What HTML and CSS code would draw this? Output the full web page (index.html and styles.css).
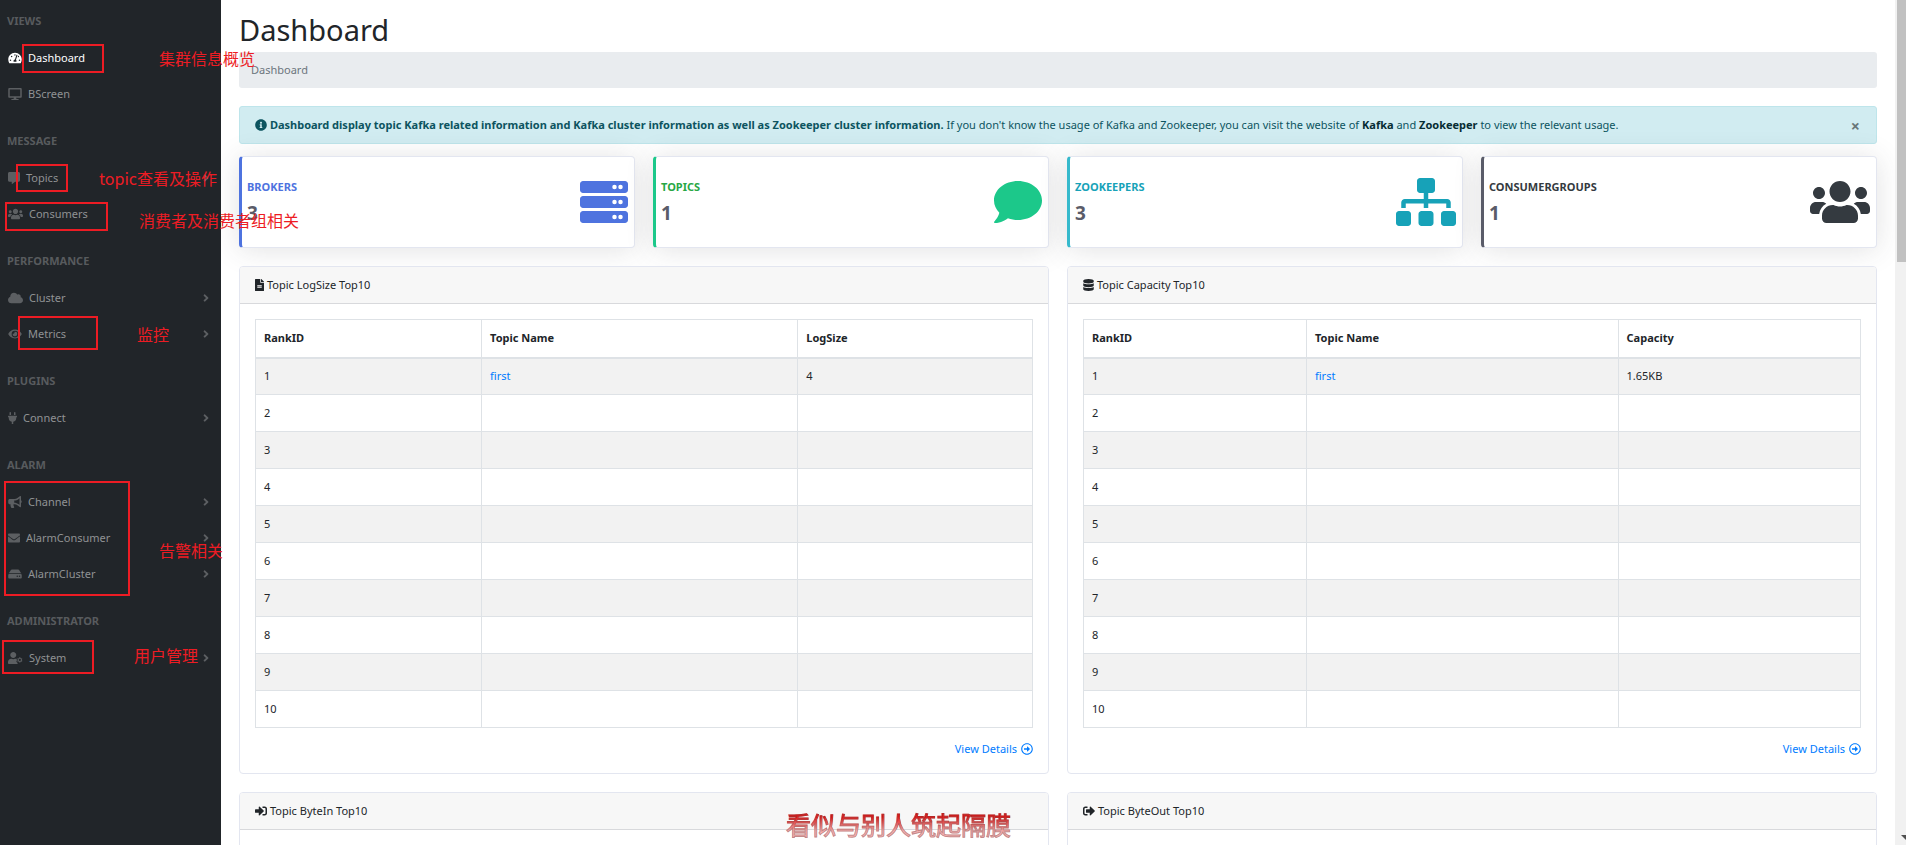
FILE: index.html
```html
<!DOCTYPE html>
<html lang="en">
<head>
<meta charset="utf-8">
<title>Dashboard</title>
<link rel="stylesheet" href="styles.css">
</head>
<body>
<svg class="sprite" aria-hidden="true">
  <symbol id="tachometer" viewBox="0 0 576 512"><path d="M288 32C128.94 32 0 160.94 0 320c0 52.8 14.25 102.26 39.06 144.8 5.61 9.62 16.3 15.2 27.44 15.2h443c11.14 0 21.83-5.58 27.44-15.2C561.75 422.26 576 372.8 576 320c0-159.06-128.94-288-288-288zm0 64c14.71 0 26.58 10.13 30.32 23.65-1.11 2.26-2.64 4.23-3.45 6.67l-9.22 27.67c-5.13 3.49-10.97 6.01-17.64 6.01-17.67 0-32-14.33-32-32S270.33 96 288 96zM96 384c-17.67 0-32-14.33-32-32s14.33-32 32-32 32 14.33 32 32-14.33 32-32 32zm48-160c-17.67 0-32-14.33-32-32s14.33-32 32-32 32 14.33 32 32-14.33 32-32 32zm246.77-72.41l-61.33 184C343.13 347.33 352 364.54 352 384c0 11.72-3.38 22.55-8.88 32H232.88c-5.5-9.45-8.88-20.28-8.88-32 0-33.94 26.5-61.43 59.9-63.59l61.34-184.01c4.17-12.56 17.73-19.45 30.36-15.17 12.57 4.19 19.35 17.79 15.17 30.36zm14.66 57.2l15.52-46.55c3.47-1.29 7.13-2.23 11.05-2.23 17.67 0 32 14.33 32 32s-14.33 32-32 32c-11.38-.01-20.89-6.28-26.57-15.22zM480 384c-17.67 0-32-14.33-32-32s14.33-32 32-32 32 14.33 32 32-14.33 32-32 32z"/></symbol>
  <symbol id="desktop" viewBox="0 0 576 512"><path d="M528 0H48C21.5 0 0 21.5 0 48v320c0 26.500 21.500 48 48 48h192l-16 48h-72c-13.300 0-24 10.700-24 24s10.700 24 24 24h272c13.300 0 24-10.700 24-24s-10.700-24-24-24h-72l-16-48h192c26.500 0 48-21.500 48-48V48c0-26.500-21.500-48-48-48zm-16 352H64V64h448v288z"/></symbol>
  <symbol id="comment-alt" viewBox="0 0 512 512"><path d="M448 0H64C28.700 0 0 28.700 0 64v288c0 35.300 28.700 64 64 64h96v84c0 9.800 11.200 15.500 19.100 9.700L304 416h144c35.300 0 64-28.700 64-64V64c0-35.300-28.700-64-64-64z"/></symbol>
  <symbol id="users" viewBox="0 0 640 512"><path d="M96 224c35.300 0 64-28.700 64-64s-28.700-64-64-64-64 28.700-64 64 28.700 64 64 64zm448 0c35.300 0 64-28.700 64-64s-28.700-64-64-64-64 28.700-64 64 28.700 64 64 64zm32 32h-64c-17.600 0-33.500 7.100-45.100 18.600 40.300 22.100 68.900 62 75.100 109.400h66c17.700 0 32-14.300 32-32v-32c0-35.300-28.700-64-64-64zm-256 0c61.900 0 112-50.100 112-112S381.900 32 320 32 208 82.100 208 144s50.100 112 112 112zm76.800 32h-8.300c-20.800 10-43.900 16-68.500 16s-47.600-6-68.500-16h-8.300C179.600 288 128 339.600 128 403.200V432c0 26.500 21.500 48 48 48h288c26.500 0 48-21.500 48-48v-28.800c0-63.600-51.600-115.200-115.200-115.200zm-223.700-13.400C161.500 263.100 145.600 256 128 256H64c-35.300 0-64 28.700-64 64v32c0 17.700 14.300 32 32 32h65.900c6.300-47.400 34.900-87.300 75.200-109.400z"/></symbol>
  <symbol id="cloud" viewBox="0 0 640 512"><path d="M537.600 226.600c4.100-10.700 6.400-22.400 6.400-34.600 0-53-43-96-96-96-19.700 0-38.100 6-53.300 16.200C367 64.200 315.300 32 256 32c-88.400 0-160 71.600-160 160 0 2.700.1 5.400.2 8.100C40.200 219.800 0 273.200 0 336c0 79.500 64.500 144 144 144h368c70.700 0 128-57.300 128-128 0-61.900-44-113.600-102.400-125.400z"/></symbol>
  <symbol id="eye" viewBox="0 0 576 512"><path d="M572.520 241.400C518.290 135.590 410.930 64 288 64S57.680 135.640 3.480 241.410a32.350 32.350 0 0 0 0 29.190C57.710 376.410 165.070 448 288 448s230.320-71.640 284.520-177.410a32.350 32.350 0 0 0 0-29.190zM288 400a144 144 0 1 1 144-144 143.930 143.930 0 0 1-144 144zm0-240a95.310 95.310 0 0 0-25.310 3.790 47.850 47.850 0 0 1-66.900 66.900A95.780 95.780 0 1 0 288 160z"/></symbol>
  <symbol id="plug" viewBox="0 0 384 512"><path d="M320 32a32 32 0 0 0-64 0v96h64zm48 128H16A16 16 0 0 0 0 176v32a16 16 0 0 0 16 16h16v32a160.070 160.070 0 0 0 128 156.800V512h64v-99.200A160.070 160.070 0 0 0 352 256v-32h16a16 16 0 0 0 16-16v-32a16 16 0 0 0-16-16zM128 32a32 32 0 0 0-64 0v96h64z"/></symbol>
  <symbol id="bullhorn" viewBox="0 0 576 512"><path d="M576 240c0-23.630-12.950-44.040-32-55.120V32.010C544 23.260 537.020 0 512 0c-7.120 0-14.190 2.380-19.980 7.020l-85.030 68.030C364.280 109.190 310.660 128 256 128H64c-35.350 0-64 28.650-64 64v96c0 35.350 28.650 64 64 64h33.700c-1.390 10.480-2.180 21.140-2.180 32 0 39.770 9.260 77.350 25.560 110.940 5.190 10.690 16.520 17.060 28.400 17.060h74.280c26.050 0 41.690-29.840 25.900-50.560-16.400-21.520-26.150-48.360-26.150-77.440 0-11.110 1.620-21.790 4.410-32H256c54.660 0 108.280 18.810 150.980 52.950l85.030 68.030a32.023 32.023 0 0 0 19.980 7.020c24.920 0 32-22.780 32-32V295.130C563.050 284.040 576 263.630 576 240zm-96 141.420l-33.050-26.440C392.950 311.780 325.120 288 256 288v-96c69.120 0 136.950-23.780 190.950-66.980L480 98.580v282.840z"/></symbol>
  <symbol id="envelope" viewBox="0 0 512 512"><path d="M502.300 190.800c3.900-3.100 9.700-.2 9.700 4.700V400c0 26.500-21.500 48-48 48H48c-26.500 0-48-21.500-48-48V195.600c0-5 5.700-7.800 9.700-4.700 22.400 17.400 52.100 39.500 154.100 113.600 21.100 15.400 56.700 47.800 92.200 47.600 35.700.3 72-32.800 92.300-47.600 102-74.100 131.600-96.300 154-113.700zM256 320c23.200.4 56.600-29.200 73.400-41.400 132.700-96.300 142.800-104.700 173.400-128.700 5.800-4.500 9.200-11.500 9.200-18.900v-19c0-26.500-21.500-48-48-48H48c-26.500 0-48 21.500-48 48v19c0 7.400 3.400 14.300 9.200 18.900 30.600 23.900 40.700 32.400 173.400 128.700 16.800 12.200 50.200 41.800 73.400 41.400z"/></symbol>
  <symbol id="hdd" viewBox="0 0 576 512"><path d="M576 304v96c0 26.500-21.500 48-48 48H48c-26.500 0-48-21.500-48-48v-96c0-26.500 21.500-48 48-48h480c26.500 0 48 21.500 48 48zm-48-80a79.600 79.600 0 0 1 30.800 6.200L462.300 85.400A48 48 0 0 0 422.300 64H153.700a48 48 0 0 0-40 21.400L17.200 230.200A79.600 79.600 0 0 1 48 224zm-48 96c-17.700 0-32 14.300-32 32s14.300 32 32 32 32-14.300 32-32-14.300-32-32-32zm-96 0c-17.700 0-32 14.300-32 32s14.300 32 32 32 32-14.300 32-32-14.300-32-32-32z"/></symbol>
  <symbol id="user-cog" viewBox="0 0 640 512"><path d="M224 256c70.700 0 128-57.300 128-128S294.700 0 224 0 96 57.300 96 128s57.300 128 128 128zM400 300c-30-10-60-12-86-12h-17a174 174 0 0 1-146 0h-17C60 288 0 348 0 422v42c0 26.500 21.500 48 48 48h352c10 0 18-2 25-6l-20-14v-34l-30-22-22-48 30-24v-28l-28-18z"/><path fill-rule="evenodd" d="M482 224h44l8 34 24 14 34-10 22 38-26 24v28l26 24-22 38-34-10-24 14-8 34h-44l-8-34-24-14-34 10-22-38 26-24v-28l-26-24 22-38 34 10 24-14zm22 66a48 48 0 1 0 0 96 48 48 0 0 0 0-96z"/></symbol>
  <symbol id="angle" viewBox="0 0 256 512"><path d="M224.300 273l-136 136c-9.400 9.400-24.600 9.400-33.900 0l-22.600-22.600c-9.400-9.400-9.400-24.600 0-33.900l96.400-96.400-96.400-96.400c-9.400-9.400-9.400-24.600 0-33.900L54.300 103c9.400-9.400 24.600-9.400 33.900 0l136 136c9.500 9.400 9.500 24.600.1 34z"/></symbol>
  <symbol id="info" viewBox="0 0 512 512"><path d="M256 8C119.040 8 8 119.080 8 256c0 137 111.040 248 248 248s248-111 248-248C504 119.080 392.960 8 256 8zm0 110c23.200 0 42 18.800 42 42s-18.800 42-42 42-42-18.800-42-42 18.800-42 42-42zm56 254c0 6.600-5.400 12-12 12h-88c-6.600 0-12-5.400-12-12v-24c0-6.600 5.400-12 12-12h12v-64h-12c-6.600 0-12-5.400-12-12v-24c0-6.600 5.400-12 12-12h64c6.600 0 12 5.400 12 12v100h12c6.600 0 12 5.400 12 12z"/></symbol>
  <symbol id="server" viewBox="0 0 512 512"><path id="unit" d="M480 160H32c-17.700 0-32-14.300-32-32V64c0-17.700 14.300-32 32-32h448c17.700 0 32 14.300 32 32v64c0 17.700-14.300 32-32 32zm-48-88a24 24 0 1 0 0 48 24 24 0 0 0 0-48zm-64 0a24 24 0 1 0 0 48 24 24 0 0 0 0-48z"/><use href="#unit" y="160"/><use href="#unit" y="320"/></symbol>
  <symbol id="comment" viewBox="0 0 512 512"><path d="M256 32C114.600 32 0 125.100 0 240c0 49.600 21.400 95 57 130.700C44.500 421.100 2.700 466 2.200 466.500c-2.200 2.300-2.800 5.700-1.500 8.700S4.800 480 8 480c66.300 0 116-31.800 140.600-51.400 32.700 12.300 69 19.400 107.400 19.400 141.400 0 256-93.100 256-208S397.400 32 256 32z"/></symbol>
  <symbol id="sitemap" viewBox="0 0 640 512"><path d="M128 352H32c-17.670 0-32 14.330-32 32v96c0 17.670 14.330 32 32 32h96c17.670 0 32-14.330 32-32v-96c0-17.670-14.330-32-32-32zm-24-80h192v48h48v-48h192v48h48v-57.590c0-21.170-17.230-38.410-38.410-38.410H344v-64h40c17.670 0 32-14.330 32-32V32c0-17.670-14.330-32-32-32H256c-17.670 0-32 14.330-32 32v96c0 17.670 14.330 32 32 32h40v64H94.410C73.230 224 56 241.230 56 262.410V320h48v-48zm264 80h-96c-17.670 0-32 14.330-32 32v96c0 17.670 14.330 32 32 32h96c17.670 0 32-14.330 32-32v-96c0-17.670-14.330-32-32-32zm240 0h-96c-17.670 0-32 14.330-32 32v96c0 17.670 14.330 32 32 32h96c17.670 0 32-14.330 32-32v-96c0-17.670-14.330-32-32-32z"/></symbol>
  <symbol id="file" viewBox="0 0 384 512"><path d="M224 136V0H24C10.700 0 0 10.700 0 24v464c0 13.300 10.700 24 24 24h336c13.300 0 24-10.700 24-24V160H248c-13.200 0-24-10.800-24-24zm64 236c0 6.600-5.400 12-12 12H108c-6.600 0-12-5.400-12-12v-8c0-6.600 5.400-12 12-12h168c6.600 0 12 5.400 12 12v8zm0-72v8c0 6.600-5.400 12-12 12H108c-6.600 0-12-5.400-12-12v-40h180c6.600 0 12 5.400 12 12v20zM384 122v6H256V0h6c6.400 0 12.500 2.500 17 7l98 98c4.500 4.500 7 10.600 7 17z"/></symbol>
  <symbol id="database" viewBox="0 0 448 512"><path d="M448 73.140v45.720C448 159.140 347.670 192 224 192S0 159.140 0 118.860V73.140C0 32.860 100.330 0 224 0s224 32.860 224 73.140zM448 176v102.860C448 319.140 347.670 352 224 352S0 319.140 0 278.860V176c48.120 33.140 136.210 48.570 224 48.570S399.870 209.140 448 176zm0 160v102.860C448 479.140 347.670 512 224 512S0 479.140 0 438.860V336c48.120 33.140 136.210 48.570 224 48.570S399.870 369.140 448 336z"/></symbol>
  <symbol id="sign-in" viewBox="0 0 512 512"><path d="M416 448h-84c-6.600 0-12-5.400-12-12v-40c0-6.600 5.400-12 12-12h84c17.700 0 32-14.300 32-32V160c0-17.700-14.300-32-32-32h-84c-6.600 0-12-5.400-12-12V76c0-6.600 5.400-12 12-12h84c53 0 96 43 96 96v192c0 53-43 96-96 96zm-47-209L201 71c-15-15-41-4.500-41 17v96H24c-13.300 0-24 10.700-24 24v96c0 13.300 10.700 24 24 24h136v96c0 21.500 26 32 41 17l168-168c9.300-9.400 9.300-24.600 0-34z"/></symbol>
  <symbol id="sign-out" viewBox="0 0 512 512"><path d="M497 273L329 441c-15 15-41 4.500-41-17v-96H152c-13.300 0-24-10.700-24-24v-96c0-13.300 10.700-24 24-24h136V88c0-21.400 25.900-32 41-17l168 168c9.300 9.400 9.300 24.600 0 34zM192 436v-40c0-6.600-5.400-12-12-12H96c-17.700 0-32-14.300-32-32V160c0-17.700 14.300-32 32-32h84c6.600 0 12-5.400 12-12V76c0-6.600-5.400-12-12-12H96c-53 0-96 43-96 96v192c0 53 43 96 96 96h84c6.600 0 12-5.400 12-12z"/></symbol>
  <symbol id="arrow-circle" viewBox="0 0 512 512"><path d="M504 256C504 119 393 8 256 8S8 119 8 256s111 248 248 248 248-111 248-248zm-448 0c0-110.500 89.500-200 200-200s200 89.500 200 200-89.500 200-200 200S56 366.500 56 256zm72 20v-40c0-6.600 5.400-12 12-12h116v-67c0-10.700 12.900-16 20.500-8.500l99 99c4.700 4.700 4.700 12.300 0 17l-99 99c-7.600 7.600-20.500 2.200-20.500-8.500v-67H140c-6.600 0-12-5.400-12-12z"/></symbol>
</svg>

<div class="app">
  <nav class="sidebar">
    <h2 class="group">Views</h2>
    <a class="item active" href="#"><svg class="icon w14"><use href="#tachometer"/></svg><span class="label">Dashboard</span></a>
    <a class="item" href="#"><svg class="icon w14"><use href="#desktop"/></svg><span class="label">BScreen</span></a>
    <h2 class="group">Message</h2>
    <a class="item" href="#"><svg class="icon w12"><use href="#comment-alt"/></svg><span class="label">Topics</span><svg class="caret"><use href="#angle"/></svg></a>
    <a class="item" href="#"><svg class="icon w15"><use href="#users"/></svg><span class="label">Consumers</span></a>
    <h2 class="group">Performance</h2>
    <a class="item" href="#"><svg class="icon w15"><use href="#cloud"/></svg><span class="label">Cluster</span><svg class="caret"><use href="#angle"/></svg></a>
    <a class="item" href="#"><svg class="icon w14"><use href="#eye"/></svg><span class="label">Metrics</span><svg class="caret"><use href="#angle"/></svg></a>
    <h2 class="group">Plugins</h2>
    <a class="item" href="#"><svg class="icon w9"><use href="#plug"/></svg><span class="label">Connect</span><svg class="caret"><use href="#angle"/></svg></a>
    <h2 class="group">Alarm</h2>
    <a class="item" href="#"><svg class="icon w14"><use href="#bullhorn"/></svg><span class="label">Channel</span><svg class="caret"><use href="#angle"/></svg></a>
    <a class="item" href="#"><svg class="icon w12"><use href="#envelope"/></svg><span class="label">AlarmConsumer</span><svg class="caret"><use href="#angle"/></svg></a>
    <a class="item" href="#"><svg class="icon w14"><use href="#hdd"/></svg><span class="label">AlarmCluster</span><svg class="caret"><use href="#angle"/></svg></a>
    <h2 class="group">Administrator</h2>
    <a class="item" href="#"><svg class="icon w15"><use href="#user-cog"/></svg><span class="label">System</span><svg class="caret"><use href="#angle"/></svg></a>
  </nav>

  <main class="content">
    <h1 class="title">Dashboard</h1>
    <ol class="breadcrumb"><li>Dashboard</li></ol>
    <div class="alert" role="alert">
      <p class="alert-text"><svg class="icon w12"><use href="#info"/></svg> <strong>Dashboard display topic Kafka related information and Kafka cluster information as well as Zookeeper cluster information.</strong> If you don't know the usage of Kafka and Zookeeper, you can visit the website of <a class="alert-link" href="#">Kafka</a> and <a class="alert-link" href="#">Zookeeper</a> to view the relevant usage.</p>
      <button class="close" type="button" aria-label="Close">×</button>
    </div>

    <section class="stats">
      <article class="stat brokers"><div><h3 class="stat-name">Brokers</h3><p class="stat-value">3</p></div><svg class="stat-icon"><use href="#server"/></svg></article>
      <article class="stat topics"><div><h3 class="stat-name">Topics</h3><p class="stat-value">1</p></div><svg class="stat-icon"><use href="#comment"/></svg></article>
      <article class="stat zookeepers"><div><h3 class="stat-name">Zookeepers</h3><p class="stat-value">3</p></div><svg class="stat-icon wide"><use href="#sitemap"/></svg></article>
      <article class="stat groups"><div><h3 class="stat-name">ConsumerGroups</h3><p class="stat-value">1</p></div><svg class="stat-icon wide"><use href="#users"/></svg></article>
    </section>

    <section class="panels">
      <article class="panel">
        <h3 class="panel-head"><svg class="icon w9"><use href="#file"/></svg>Topic LogSize Top10</h3>
        <div class="panel-body">
          <table class="rank logsize">
            <thead><tr><th class="c1">RankID</th><th class="c2">Topic Name</th><th>LogSize</th></tr></thead>
            <tbody>
              <tr><td>1</td><td><a href="#">first</a></td><td>4</td></tr>
              <tr><td>2</td><td></td><td></td></tr><tr><td>3</td><td></td><td></td></tr>
              <tr><td>4</td><td></td><td></td></tr><tr><td>5</td><td></td><td></td></tr>
              <tr><td>6</td><td></td><td></td></tr><tr><td>7</td><td></td><td></td></tr>
              <tr><td>8</td><td></td><td></td></tr><tr><td>9</td><td></td><td></td></tr>
              <tr><td>10</td><td></td><td></td></tr>
            </tbody>
          </table>
          <a class="details" href="#">View Details<svg class="icon w12"><use href="#arrow-circle"/></svg></a>
        </div>
      </article>
      <article class="panel">
        <h3 class="panel-head"><svg class="icon w11"><use href="#database"/></svg>Topic Capacity Top10</h3>
        <div class="panel-body">
          <table class="rank capacity">
            <thead><tr><th class="c1">RankID</th><th class="c2">Topic Name</th><th>Capacity</th></tr></thead>
            <tbody>
              <tr><td>1</td><td><a href="#">first</a></td><td>1.65KB</td></tr>
              <tr><td>2</td><td></td><td></td></tr><tr><td>3</td><td></td><td></td></tr>
              <tr><td>4</td><td></td><td></td></tr><tr><td>5</td><td></td><td></td></tr>
              <tr><td>6</td><td></td><td></td></tr><tr><td>7</td><td></td><td></td></tr>
              <tr><td>8</td><td></td><td></td></tr><tr><td>9</td><td></td><td></td></tr>
              <tr><td>10</td><td></td><td></td></tr>
            </tbody>
          </table>
          <a class="details" href="#">View Details<svg class="icon w12"><use href="#arrow-circle"/></svg></a>
        </div>
      </article>
      <article class="panel">
        <h3 class="panel-head"><svg class="icon w12"><use href="#sign-in"/></svg>Topic ByteIn Top10</h3>
        <div class="panel-body"></div>
      </article>
      <article class="panel">
        <h3 class="panel-head"><svg class="icon w12"><use href="#sign-out"/></svg>Topic ByteOut Top10</h3>
        <div class="panel-body"></div>
      </article>
    </section>
  </main>

  <div class="scrollbar" aria-hidden="true"><div class="thumb"></div><svg class="scroll-arrow" viewBox="0 0 5 5"><path d="M0 0h5v5z"/></svg></div>
</div>

<div class="notes">
  <span class="box b-dashboard"></span><span class="note n-dashboard">集群信息概览</span>
  <span class="box b-topics"></span><span class="note n-topics">topic查看及操作</span>
  <span class="box b-consumers"></span><span class="note n-consumers">消费者及消费者组相关</span>
  <span class="box b-metrics"></span><span class="note n-metrics">监控</span>
  <span class="box b-alarm"></span><span class="note n-alarm">告警相关</span>
  <span class="box b-system"></span><span class="note n-system">用户管理</span>
  <span class="subtitle">看似与别人筑起隔膜</span>
</div>
</body>
</html>
```
FILE: styles.css
```css
* { box-sizing: border-box; }

body {
  margin: 0;
  font-family: "Noto Sans", "Noto Sans CJK SC", sans-serif;
  font-size: 11px;
  line-height: 18px;
  color: #212529;
  background: #fff;
}

h1, h2, h3, p, ol { margin: 0; padding: 0; }
a { color: #007bff; text-decoration: none; }
.sprite { position: absolute; width: 0; height: 0; }

.icon { flex: none; height: 12px; fill: currentColor; }
.w9 { width: 9px; }
.w11 { width: 11px; }
.w12 { width: 12px; }
.w14 { width: 14px; }
.w15 { width: 15px; }

.app {
  display: grid;
  grid-template-columns: 221px minmax(0, 1fr) 11px;
  height: 100vh;
  overflow: hidden;
}

/* Sidebar */
.sidebar { background: #212529; }
.group {
  padding: 20px 7px 10px;
  font-size: 11px;
  font-weight: 700;
  text-transform: uppercase;
  color: #585b5e;
}
.group:first-child { padding-top: 12px; }
.item {
  display: flex;
  align-items: center;
  gap: 6px;
  height: 36px;
  padding: 0 12px 0 8px;
  color: #909294;
}
.item .icon, .caret { fill: #5c5f62; }
.item.active { color: #fff; }
.item.active .icon { fill: #fff; }
.label { flex: 1; }
.caret { width: 6px; height: 12px; }

/* Content */
.content { padding: 8px 18px 0; overflow: hidden; }
.title { font-size: 29px; line-height: 44px; font-weight: 400; }
.breadcrumb {
  list-style: none;
  margin-bottom: 18px;
  padding: 9px 12px;
  border-radius: 3px;
  color: #6c757d;
  background: #e9ecef;
}
.alert {
  display: flex;
  align-items: center;
  justify-content: space-between;
  margin-bottom: 12px;
  padding: 9px 16px 9px 15px;
  border: 1px solid #bee5eb;
  border-radius: 3px;
  color: #0c5460;
  background: #d1ecf1;
}
.alert-text .icon { vertical-align: -2px; }
.alert-link { font-weight: 700; color: #062c33; }
.close {
  padding: 2px 0 0;
  border: 0;
  font: 700 16px/16px "Noto Sans", sans-serif;
  color: #687678;
  background: none;
}

.stats {
  display: grid;
  grid-template-columns: repeat(4, minmax(0, 1fr));
  gap: 18px;
  margin-bottom: 18px;
}
.stat {
  display: flex;
  align-items: center;
  justify-content: space-between;
  height: 92px;
  padding: 0 6px 0 5px;
  border: 1px solid #e3e6f0;
  border-left: 3px solid;
  border-radius: 4px;
  background: #fff;
  box-shadow: 0 2px 28px rgba(58, 59, 69, 0.15);
}
.stat-name { padding-top: 4px; font-size: 11px; font-weight: 700; text-transform: uppercase; }
.stat-value { padding: 4px 0; font-size: 19px; line-height: 26px; font-weight: 700; color: #5a5c69; }
.stat-icon { width: 48px; height: 48px; fill: currentColor; }
.stat-icon.wide { width: 60px; }
.brokers { color: #4e73df; }
.topics { border-left-color: #1cc88a; color: #1cc88a; }
.topics .stat-name { color: #28a745; }
.zookeepers { border-left-color: #36b9cc; color: #17a2b8; }
.groups { border-left-color: #5a5c69; color: #343a40; }

.panels {
  display: grid;
  grid-template-columns: repeat(2, minmax(0, 1fr));
  gap: 18px;
}
.panel {
  position: relative;
  border: 1px solid #e3e6f0;
  border-radius: 4px;
  background: #fff;
  overflow: hidden;
}
.panel-head {
  display: flex;
  align-items: center;
  gap: 3px;
  padding: 9px 15px;
  border-bottom: 1px solid #d8d9dc;
  font-size: 11px;
  font-weight: 400;
  background: #f7f7f7;
}
.panel-body { min-height: 60px; padding: 15px; }
.rank {
  width: 100%;
  margin-bottom: 12px;
  table-layout: fixed;
  border-collapse: collapse;
}
.rank th, .rank td {
  height: 37px;
  padding: 0 8px;
  border: 1px solid #dee2e6;
  text-align: left;
}
.rank thead th { height: 38px; border-bottom-width: 2px; }
.rank tbody tr:nth-child(odd) { background: #f2f2f2; }
.logsize .c1 { width: 29.1%; }
.logsize .c2 { width: 40.7%; }
.capacity .c1 { width: 28.7%; }
.capacity .c2 { width: 40.1%; }
.details {
  display: flex;
  align-items: center;
  justify-content: flex-end;
  gap: 4px;
}

/* Scrollbar */
.scrollbar {
  display: flex;
  flex-direction: column;
  justify-content: space-between;
  align-items: flex-end;
  padding: 0 0 5px 2px;
  background: #f1f1f1;
}
.thumb { width: 100%; height: 31vh; background: #c1c1c1; }
.scroll-arrow { width: 5px; height: 5px; fill: #505050; }

/* Annotations over the page */
.notes { position: absolute; top: 0; left: 0; color: #ed1c24; }
.box { position: absolute; border: 2px solid #ed1c24; }
.note {
  position: absolute;
  font: 16px/20px "Noto Sans CJK SC", sans-serif;
  white-space: nowrap;
}
.b-dashboard { left: 22px; top: 44px; width: 82px; height: 29px; }
.b-topics { left: 16px; top: 164px; width: 52px; height: 28px; }
.b-consumers { left: 5px; top: 202px; width: 103px; height: 29px; }
.b-metrics { left: 18px; top: 316px; width: 80px; height: 34px; }
.b-alarm { left: 4px; top: 481px; width: 126px; height: 115px; }
.b-system { left: 2px; top: 640px; width: 92px; height: 34px; }
.n-dashboard { left: 159px; top: 48px; }
.n-topics { left: 99px; top: 168px; }
.n-consumers { left: 139px; top: 210px; }
.n-metrics { left: 137px; top: 324px; }
.n-alarm { left: 159px; top: 540px; }
.n-system { left: 134px; top: 645px; }
.subtitle {
  position: absolute;
  left: 786px;
  top: 810px;
  font: 25px/28px "Noto Sans CJK SC", serif;
  white-space: nowrap;
  color: transparent;
  background: linear-gradient(#e81414 25%, #ffb4b4 75%);
  -webkit-background-clip: text;
  background-clip: text;
  -webkit-text-stroke: 1px rgba(100, 70, 70, 0.4);
}
```
